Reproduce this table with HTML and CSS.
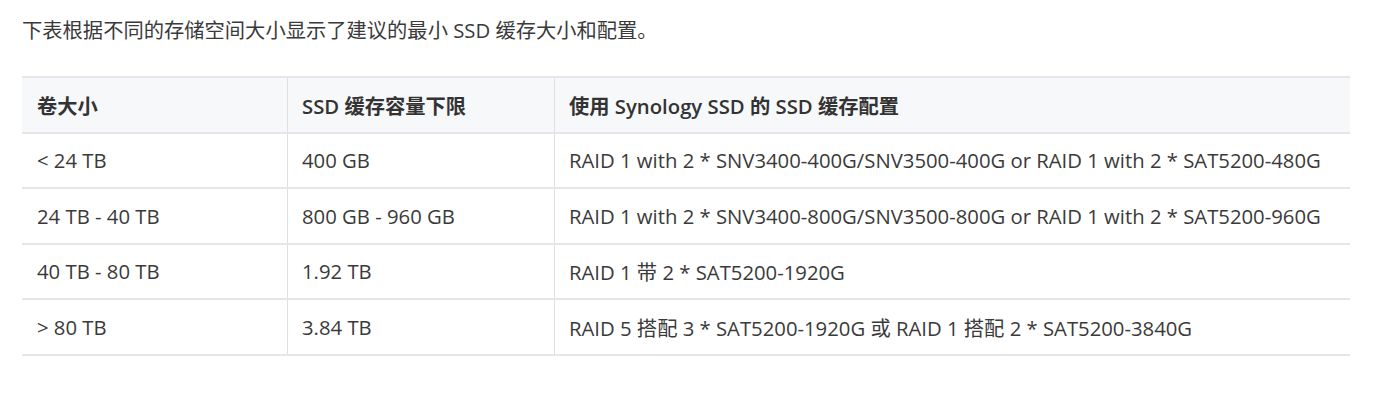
FILE: index.html
```html
<!DOCTYPE html>
<html lang="zh-CN">
<head>
<meta charset="utf-8">
<link rel="stylesheet" href="styles.css">
</head>
<body>
<main class="article">
  <p class="intro">下表根据不同的存储空间大小显示了建议的最小 SSD 缓存大小和配置。</p>
  <table class="spec">
    <thead>
      <tr>
        <th class="c1">卷大小</th>
        <th class="c2">SSD 缓存容量下限</th>
        <th class="c3">使用 Synology SSD 的 SSD 缓存配置</th>
      </tr>
    </thead>
    <tbody>
      <tr><td>&lt; 24 TB</td><td>400 GB</td><td>RAID 1 with 2 * SNV3400-400G/SNV3500-400G or RAID 1 with 2 * SAT5200-480G</td></tr>
      <tr><td>24 TB - 40 TB</td><td>800 GB - 960 GB</td><td>RAID 1 with 2 * SNV3400-800G/SNV3500-800G or RAID 1 with 2 * SAT5200-960G</td></tr>
      <tr><td>40 TB - 80 TB</td><td>1.92 TB</td><td>RAID 1 带 2 * SAT5200-1920G</td></tr>
      <tr><td>&gt; 80 TB</td><td>3.84 TB</td><td>RAID 5 搭配 3 * SAT5200-1920G 或 RAID 1 搭配 2 * SAT5200-3840G</td></tr>
    </tbody>
  </table>
</main>
</body>
</html>
```
FILE: styles.css
```css
html, body {
  margin: 0;
  padding: 0;
  background: #ffffff;
}
body {
  font-family: "Open Sans", "Noto Sans CJK SC", sans-serif;
  font-size: 20.3px;
  color: #3a3a3a;
}
.article {
  padding: 16px 23px 0 22px;
}
.intro {
  margin: 0;
  line-height: 28px;
}
.spec {
  margin-top: 32px;
  width: 100%;
  border-collapse: collapse;
  border-top: 2px solid #e6e6ea;
}
.spec th, .spec td {
  text-align: left;
  padding: 0 14px 0 15px;
  height: 53.5px;
  border-bottom: 2px solid #e6e6ea;
  vertical-align: middle;
}
.spec th + th, .spec td + td {
  border-left: 1px solid #e0e0e4;
  padding-left: 14px;
}
.spec th {
  background: #f7f8fa;
  font-weight: 600;
  color: #333333;
}
.c1 { width: 236px; }
.c2 { width: 238px; }
```
